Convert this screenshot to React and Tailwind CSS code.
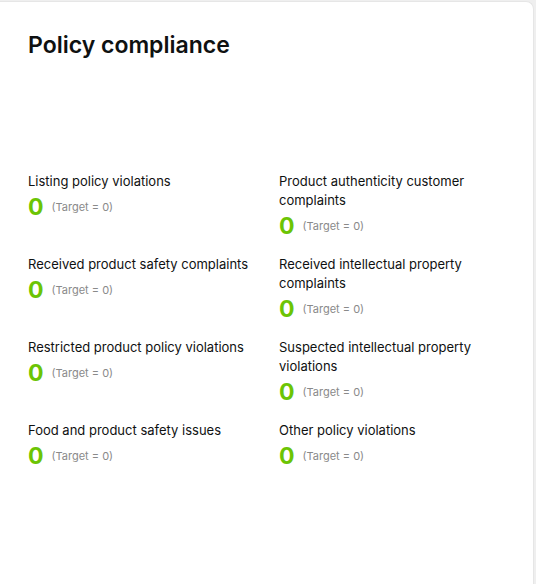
import React from 'react'

const items = [
  'Listing policy violations',
  'Product authenticity customer complaints',
  'Received product safety complaints',
  'Received intellectual property complaints',
  'Restricted product policy violations',
  'Suspected intellectual property violations',
  'Food and product safety issues',
  'Other policy violations',
]

const App = () => {
  return (
    <div className="h-[584px] bg-[#efefef] pt-px pr-[2px] font-['Inter',sans-serif]">
      <div className="h-full bg-white rounded-tr-lg border-r border-t border-[#e6e6e6] pl-[28px] pr-[28px] pt-[27px]">
        <h2 className="text-[23px] leading-[32px] font-semibold text-[#0f1111]">Policy compliance</h2>
        <div className="mt-[111px] grid grid-cols-2 gap-x-[25px] gap-y-[15px]">
          {items.map((label) => (
            <div key={label}>
              <p className="text-[13px] leading-[19px] text-[#0f1111]">{label}</p>
              <div className="mt-[2px] flex items-center gap-[8px] leading-[28px]">
                <span className="text-[23px] font-bold text-[#6cc404]">0</span>
                <span className="text-[11px] text-[#8a8a8a]">(Target = 0)</span>
              </div>
            </div>
          ))}
        </div>
      </div>
    </div>
  )
}

export default App
